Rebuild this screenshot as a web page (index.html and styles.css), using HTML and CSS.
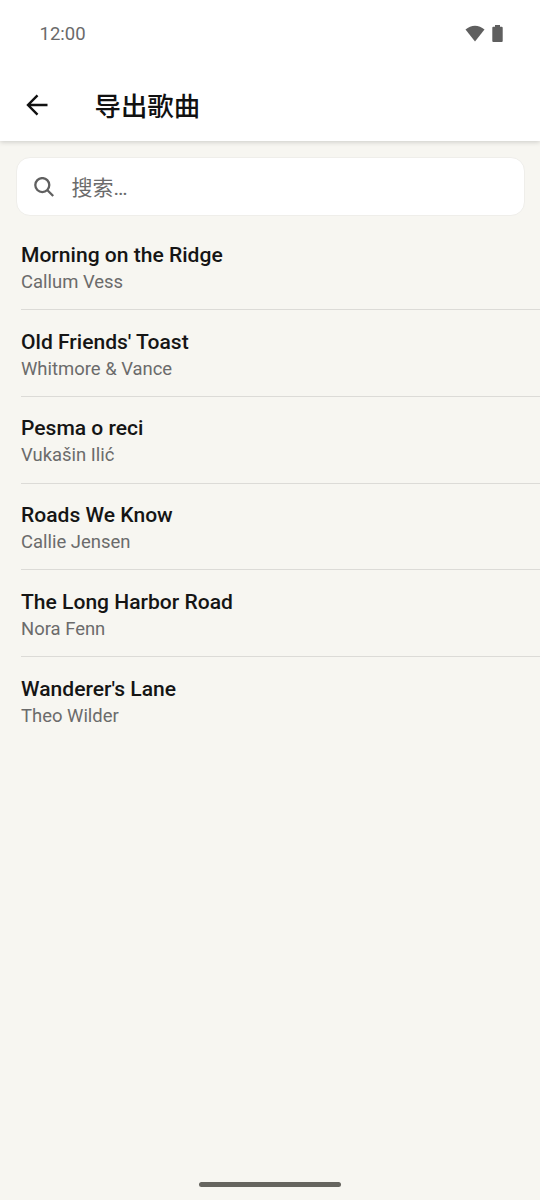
FILE: index.html
```html
<!DOCTYPE html>
<html lang="zh-CN">
<head>
<meta charset="utf-8">
<title>导出歌曲</title>
<link rel="stylesheet" href="styles.css">
</head>
<body>
<div class="screen">
  <header class="top">
    <div class="status">
      <span class="clock">12:00</span>
      <svg class="wifi" viewBox="0 0 20 17"><path d="M.5 4.500C6-.6 14-.6 19.500 4.500L10 16.500z"/></svg>
      <svg class="battery" viewBox="0 0 11 17"><path d="M3 0h5v1.800h1.700a1 1 0 0 1 1 1V16a1 1 0 0 1-1 1H1.300a1 1 0 0 1-1-1V2.800a1 1 0 0 1 1-1H3z"/></svg>
    </div>
    <div class="appbar">
      <svg class="back" viewBox="0 0 24 24"><path d="M22.500 12H3.500M12.500 2.300L3 12l9.500 9.700"/></svg>
      <h1 class="title">导出歌曲</h1>
    </div>
  </header>
  <main class="content">
    <div class="search">
      <svg class="lens" viewBox="0 0 20 20"><circle cx="8.300" cy="8.100" r="7"/><path d="M13.200 13l6 6"/></svg>
      <span class="hint">搜索…</span>
    </div>
    <ul class="songs">
      <li class="song"><span class="name">Morning on the Ridge</span><span class="artist">Callum Vess</span></li>
      <li class="song"><span class="name">Old Friends' Toast</span><span class="artist">Whitmore &amp; Vance</span></li>
      <li class="song"><span class="name">Pesma o reci</span><span class="artist">Vukašin Ilić</span></li>
      <li class="song"><span class="name">Roads We Know</span><span class="artist">Callie Jensen</span></li>
      <li class="song"><span class="name">The Long Harbor Road</span><span class="artist">Nora Fenn</span></li>
      <li class="song"><span class="name">Wanderer's Lane</span><span class="artist">Theo Wilder</span></li>
    </ul>
  </main>
  <footer class="nav"><div class="handle"></div></footer>
</div>
</body>
</html>
```
FILE: styles.css
```css
* { box-sizing: border-box; }
body { margin: 0; font-family: Roboto, "Noto Sans CJK SC", sans-serif; }
.screen { width: 540px; height: 1200px; display: flex; flex-direction: column; background: #f7f6f1; overflow: hidden; }
.top { height: 141px; flex: none; background: #fff; box-shadow: 0 1px 5px rgba(0,0,0,.18); }
.status { height: 67px; display: flex; align-items: center; padding: 0 37px 0 39.500px; }
.clock { flex: 1; font-size: 18.500px; color: #6a6a6a; }
.wifi { width: 20px; height: 17px; fill: #5f5f5f; margin-right: 7px; }
.battery { width: 11px; height: 17px; fill: #5f5f5f; }
.appbar { height: 74px; display: flex; align-items: center; padding: 2px 0 0 25px; }
.back { width: 24px; height: 24px; fill: none; stroke: #111; stroke-width: 2.400; }
.title { margin: 3px 0 0 45.500px; font-size: 26.400px; line-height: 36px; font-weight: 500; color: #111; }
.content { flex: 1; padding-top: 16px; }
.search { height: 59px; margin: 0 15px 0 16px; padding-left: 17px; display: flex; align-items: center; background: #fff; border: 1px solid #efeeea; border-radius: 14px; }
.lens { width: 20px; height: 20px; fill: none; stroke: #606060; stroke-width: 2.300; }
.hint { margin: -2px 0 0 17.500px; font-size: 21px; color: #6b6b6b; }
.songs { list-style: none; margin: 7px 0 0 21px; padding: 0; }
.song { height: 86.850px; padding-top: 17.800px; display: flex; flex-direction: column; border-bottom: 1px solid #dcdbd7; }
.song:last-child { border-bottom: 0; }
.name { font-size: 21.070px; line-height: 28px; font-weight: 500; color: #151515; }
.artist { font-size: 18.450px; line-height: 26px; color: #6b6b6b; }
.nav { height: 24px; padding-top: 6px; }
.handle { width: 142px; height: 5px; margin: 0 auto; border-radius: 3px; background: #66655f; }
```
